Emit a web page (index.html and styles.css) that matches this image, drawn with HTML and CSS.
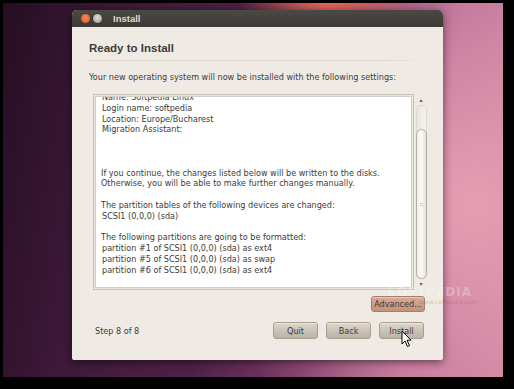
FILE: index.html
```html
<!DOCTYPE html>
<html lang="en">
<head>
    <meta charset="UTF-8">
    <title>Install</title>
    <link rel="stylesheet" href="styles.css">
</head>
<body>
    <div class="desktop">
        <div class="window">
            <div class="titlebar">
                <span class="wbtn close"></span>
                <span class="wbtn minimize"></span>
                <span class="title">Install</span>
            </div>
            <div class="content">
                <h1>Ready to Install</h1>
                <div class="rule"></div>
                <p class="intro">Your new operating system will now be installed with the following settings:</p>

                <div class="summary">
                    <div class="frame">
                        <div class="textview">
                            <div class="lines">
                                <div>Name: Softpedia Linux</div>
                                <div>Login name: softpedia</div>
                                <div>Location: Europe/Bucharest</div>
                                <div>Migration Assistant:</div>
                                <div>&nbsp;</div>
                                <div>&nbsp;</div>
                                <div>&nbsp;</div>
                                <div class="flush">If you continue, the changes listed below will be written to the disks.</div>
                                <div class="flush">Otherwise, you will be able to make further changes manually.</div>
                                <div>&nbsp;</div>
                                <div class="flush">The partition tables of the following devices are changed:</div>
                                <div>SCSI1 (0,0,0) (sda)</div>
                                <div>&nbsp;</div>
                                <div class="flush">The following partitions are going to be formatted:</div>
                                <div>partition #1 of SCSI1 (0,0,0) (sda) as ext4</div>
                                <div>partition #5 of SCSI1 (0,0,0) (sda) as swap</div>
                                <div>partition #6 of SCSI1 (0,0,0) (sda) as ext4</div>
                            </div>
                        </div>
                    </div>
                    <div class="scrollbar">
                        <span class="arrow">&#9652;</span>
                        <div class="trough">
                            <div class="thumb"><span class="grip"></span></div>
                        </div>
                        <span class="arrow">&#9662;</span>
                    </div>
                </div>

                <div class="advanced-row">
                    <button class="btn advanced">Advanced...</button>
                </div>

                <div class="footer">
                    <span class="step">Step 8 of 8</span>
                    <div class="actions">
                        <button class="btn">Quit</button>
                        <button class="btn">Back</button>
                        <button class="btn">Install</button>
                    </div>
                </div>
            </div>
        </div>

        <!-- watermark + pointer lie over the picture -->
        <div class="watermark">SOFTPEDIA<small>www.softpedia.com</small></div>
        <svg class="cursor" width="12" height="18" viewBox="0 0 12 18">
            <path d="M1 1 L1 14 L4 11 L6.5 16.5 L8.5 15.6 L6 10.2 L10 10.2 Z" fill="#fff" stroke="#000" stroke-width="1" stroke-linejoin="round"/>
        </svg>
    </div>
</body>
</html>
```

FILE: styles.css
```css
* {
    margin: 0;
    padding: 0;
    box-sizing: border-box;
}

body {
    background: #000;
    width: 514px;
    height: 389px;
    overflow: hidden;
    padding: 3px 11px 12px 3px;
    font-family: "DejaVu Sans", sans-serif;
    color: #3c3b37;
}

/* Desktop */
.desktop {
    position: relative;
    width: 500px;
    height: 374px;
    padding: 7px 0 0 69px;
    background:
        radial-gradient(ellipse 90px 28px at 325px 0, rgba(255, 110, 80, 0.85), rgba(255, 110, 80, 0) 100%),
        radial-gradient(ellipse 260px 300px at 470px 200px, rgba(232, 160, 180, 0.95), rgba(232, 160, 180, 0) 100%),
        linear-gradient(100deg, #240e21 0%, #3d1838 20%, #4f2148 45%, #7c3a68 65%, #b66a93 82%, #c77d9c 100%);
}

/* Window */
.window {
    width: 371px;
    height: 350px;
    background: #efebe4;
    border-radius: 5px 5px 2px 2px;
    box-shadow: 0 2px 8px rgba(0, 0, 0, 0.55);
    display: flex;
    flex-direction: column;
}

.titlebar {
    height: 17px;
    background: linear-gradient(#4a4944, #3b3a36);
    border-radius: 5px 5px 0 0;
    display: flex;
    align-items: center;
    padding-left: 9px;
    gap: 3px;
}

.wbtn {
    width: 9px;
    height: 9px;
    border-radius: 50%;
}

.close {
    background: radial-gradient(circle at 50% 40%, #f38b64, #d8562c);
    box-shadow: 0 0 0 1px #55392d;
}

.minimize {
    background: radial-gradient(circle at 50% 40%, #e2dfd9, #98958f);
    box-shadow: 0 0 0 1px #3a3935;
}

.title {
    margin-left: 8px;
    font-family: "Liberation Sans", sans-serif;
    font-size: 9.5px;
    font-weight: bold;
    color: #dfdbd2;
}

.content {
    flex: 1;
    padding: 14px 16px 21px 17px;
    display: flex;
    flex-direction: column;
}

h1 {
    font-family: "Liberation Sans", sans-serif;
    font-size: 11.5px;
    line-height: 15px;
    font-weight: bold;
    color: #3c3b37;
}

.rule {
    height: 1px;
    margin: 4px 0 0 0;
    background: linear-gradient(90deg, #d9d4ca, #d9d4ca 85%, rgba(217, 212, 202, 0));
}

.intro {
    margin-top: 11px;
    font-size: 8.1px;
    line-height: 11px;
    color: #3c3b37;
}

/* Summary box */
.summary {
    margin: 11px 0 0 4px;
    display: flex;
    height: 196px;
}

.frame {
    width: 322px;
    border: 1px solid #c9c2b4;
    padding: 1px;
    background: #e9e5dc;
}

.textview {
    height: 100%;
    background: #fff;
    border: 1px solid #d4cfc4;
    overflow: hidden;
    padding-left: 5px;
}

.lines {
    margin-top: -5px;
    font-size: 8.1px;
    line-height: 10.8px;
    color: #3c3b37;
    white-space: nowrap;
}

.lines div {
    padding-left: 1px;
}

.lines .flush {
    padding-left: 0;
}

.scrollbar {
    width: 12px;
    margin: 2px 0 2px 1px;
    display: flex;
    flex-direction: column;
    align-items: center;
}

.arrow {
    font-size: 6px;
    line-height: 8px;
    height: 8px;
    color: #5f5b54;
}

.trough {
    flex: 1;
    width: 11px;
    margin: 1px 0;
    display: flex;
    flex-direction: column;
    justify-content: flex-end;
    background: linear-gradient(90deg, #e9e5dc, #f6f3ee);
    border: 1px solid #ddd8ce;
    border-radius: 5px;
}

.thumb {
    height: 150px;
    margin: 0 -1px -1px;
    background: linear-gradient(90deg, #f4f1ec, #fbfaf7 50%, #e6e1d8);
    border: 1px solid #b4ad9f;
    border-radius: 6px;
    display: flex;
    align-items: center;
    justify-content: center;
}

.grip {
    width: 3px;
    height: 3px;
    border-top: 1px solid #cfc9bd;
    border-bottom: 1px solid #cfc9bd;
}

/* Buttons */
.advanced-row {
    display: flex;
    justify-content: flex-end;
    margin-top: 6px;
    padding-right: 2px;
}

.btn {
    font-family: "DejaVu Sans", sans-serif;
    font-size: 8.1px;
    color: #3c3b37;
    height: 17px;
    border: 1px solid #a89f91;
    border-radius: 3px;
    background: linear-gradient(#ddd7cd, #c9c1b5 55%, #bcb3a6);
    box-shadow: inset 0 1px 0 rgba(255, 255, 255, 0.4);
}

.advanced {
    width: 54px;
    height: 16px;
    background: linear-gradient(#d6ab95, #c4927b);
    border-color: #a67e6b;
}

.footer {
    margin-top: auto;
    display: flex;
    align-items: center;
    justify-content: space-between;
    padding-left: 6px;
    padding-right: 3px;
}

.step {
    font-size: 8.1px;
    color: #3c3b37;
}

.actions {
    display: flex;
    gap: 8px;
}

.actions .btn {
    width: 45px;
}

/* Overlays */
.watermark {
    position: absolute;
    left: 384px;
    top: 283px;
    font-size: 12px;
    font-weight: bold;
    letter-spacing: 1px;
    color: rgba(255, 255, 255, 0.28);
    line-height: 12px;
}

.watermark small {
    display: block;
    font-size: 6px;
    font-weight: normal;
    letter-spacing: 0;
    margin-left: 32px;
    line-height: 8px;
    color: rgba(120, 80, 80, 0.3);
}

.cursor {
    position: absolute;
    left: 398px;
    top: 327px;
}
```
